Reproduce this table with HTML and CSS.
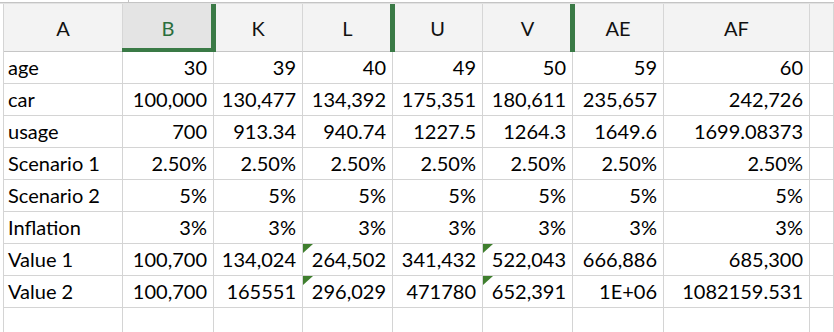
FILE: index.html
```html
<!DOCTYPE html>
<html>
<head>
<meta charset="utf-8">
<link rel="stylesheet" href="styles.css">
</head>
<body>
<div class="topbar"><span class="tick"></span></div>
<div class="grid">
  <div class="hd">A</div>
  <div class="hd sel hid">B</div>
  <div class="hd">K</div>
  <div class="hd hid">L</div>
  <div class="hd">U</div>
  <div class="hd hid">V</div>
  <div class="hd">AE</div>
  <div class="hd">AF</div>
  <div class="hd"></div>

  <div class="c t">age</div><div class="c">30</div><div class="c">39</div><div class="c">40</div><div class="c">49</div><div class="c">50</div><div class="c">59</div><div class="c">60</div><div class="c"></div>

  <div class="c t">car</div><div class="c">100,000</div><div class="c">130,477</div><div class="c">134,392</div><div class="c">175,351</div><div class="c">180,611</div><div class="c">235,657</div><div class="c">242,726</div><div class="c"></div>

  <div class="c t">usage</div><div class="c">700</div><div class="c">913.34</div><div class="c">940.74</div><div class="c">1227.5</div><div class="c">1264.3</div><div class="c">1649.6</div><div class="c">1699.08373</div><div class="c"></div>

  <div class="c t">Scenario 1</div><div class="c">2.50%</div><div class="c">2.50%</div><div class="c">2.50%</div><div class="c">2.50%</div><div class="c">2.50%</div><div class="c">2.50%</div><div class="c">2.50%</div><div class="c"></div>

  <div class="c t">Scenario 2</div><div class="c">5%</div><div class="c">5%</div><div class="c">5%</div><div class="c">5%</div><div class="c">5%</div><div class="c">5%</div><div class="c">5%</div><div class="c"></div>

  <div class="c t">Inflation</div><div class="c">3%</div><div class="c">3%</div><div class="c">3%</div><div class="c">3%</div><div class="c">3%</div><div class="c">3%</div><div class="c">3%</div><div class="c"></div>

  <div class="c t">Value 1</div><div class="c">100,700</div><div class="c">134,024</div><div class="c flag">264,502</div><div class="c">341,432</div><div class="c flag">522,043</div><div class="c">666,886</div><div class="c">685,300</div><div class="c"></div>

  <div class="c t">Value 2</div><div class="c">100,700</div><div class="c">165551</div><div class="c flag">296,029</div><div class="c">471780</div><div class="c flag">652,391</div><div class="c">1E+06</div><div class="c">1082159.531</div><div class="c"></div>

  <div class="c t"></div><div class="c"></div><div class="c"></div><div class="c"></div><div class="c"></div><div class="c"></div><div class="c"></div><div class="c"></div><div class="c"></div>
</div>
</body>
</html>
```

FILE: styles.css
```css
html, body {
  margin: 0;
  padding: 0;
  background: #ffffff;
  overflow: hidden;
}

body {
  width: 834px;
  height: 332px;
  font-family: Lato, "Open Sans", sans-serif;
  font-size: 20px;
  color: #000;
}

.topbar {
  height: 2px;
  border-bottom: 1px solid #c4c4c4;
  box-shadow: 0 1px 0 #e2e2e2;
  position: relative;
}

.tick {
  position: absolute;
  left: 128px;
  top: 0;
  width: 1px;
  height: 2px;
  background: #c4c4c4;
}

.grid {
  margin-top: 1px;
  margin-left: 3px;
  border-left: 1px solid #d4d4d4;
  display: grid;
  grid-template-columns: 119px 91px 89px 90px 90px 90px 91px 146px 1fr;
  grid-template-rows: 48px repeat(9, 32px);
}

.hd {
  position: relative;
  box-sizing: border-box;
  background: #f3f3f3;
  border-right: 1px solid #d6d6d6;
  border-bottom: 1px solid #c6c6c6;
  text-align: center;
  line-height: 44px;
  padding-top: 2px;
  color: #111;
}

.hd.sel {
  background: #e4e4e4;
  color: #2b6e3c;
}

.hd.sel::before {
  content: "";
  position: absolute;
  left: -1px;
  right: -2px;
  bottom: -1px;
  height: 4px;
  background: #3a7a46;
  z-index: 2;
}

.hd.hid::after {
  content: "";
  position: absolute;
  top: 0;
  bottom: -1px;
  right: -3px;
  width: 5px;
  background: #3a7a46;
  z-index: 2;
}

.c {
  position: relative;
  box-sizing: border-box;
  border-right: 1px solid #d4d4d4;
  border-bottom: 1px solid #d4d4d4;
  text-align: right;
  padding: 0 6px 0 4px;
  line-height: 31px;
  white-space: nowrap;
  overflow: visible;
}

.c.t {
  text-align: left;
  padding-left: 4px;
}

.c.flag::before {
  content: "";
  position: absolute;
  top: 0;
  left: 0;
  border-top: 9px solid #3f7f2e;
  border-right: 10px solid transparent;
}
```
